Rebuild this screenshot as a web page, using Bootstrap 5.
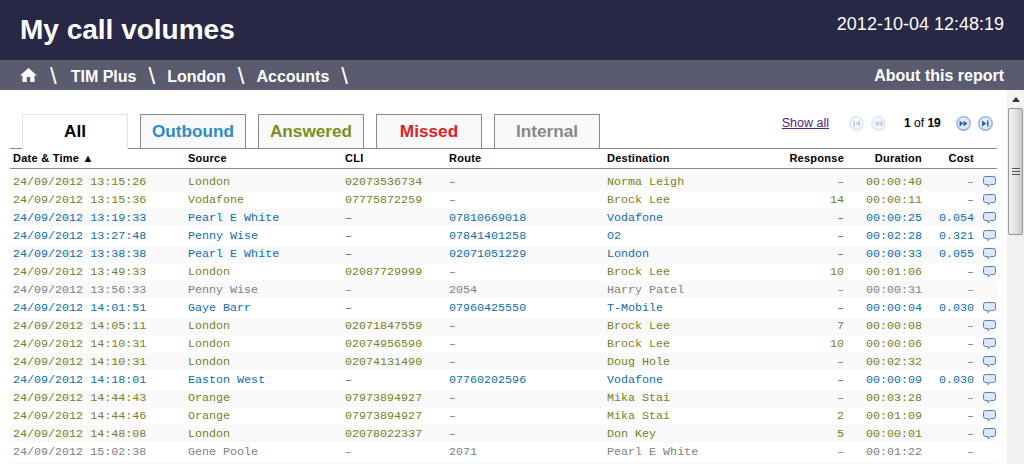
<!DOCTYPE html>
<html lang="en">
<head>
<meta charset="utf-8">
<title>My call volumes</title>
<link href="https://cdn.jsdelivr.net/npm/bootstrap@5.3.0/dist/css/bootstrap.min.css" rel="stylesheet">
<style>
html,body{height:464px;overflow:hidden;background:#fff;font-family:"Liberation Sans",Arial,sans-serif;}
.top-band{height:60px;background:#282745;color:#fff;padding:0 20px;}
.top-band h1{font-size:28px;font-weight:700;margin:0;line-height:60px;}
.top-clock{font-size:18px;line-height:49px;}
.crumb-band{height:30px;background:#5b5b70;color:#fff;padding:0 20px;font-size:16px;font-weight:700;}
.crumb-band a{color:#fff;text-decoration:none;}
.crumb-home{margin-right:1px;}
.crumb-text{padding-top:4px;}
.crumb-sep{font-weight:400;font-size:24px;margin:0 12px;line-height:30px;padding-top:2px;}
.crumb-first{margin-left:2px;}
.crumb-about{padding-top:2px;}
.page-body{height:374px;}
.report-pane{flex:1 1 auto;min-width:0;overflow:hidden;padding:24px 10px 0;}
.tab-strip{height:34px;}
.tab-list{margin-left:12px;gap:12px;border:0;}
.tab-list .nav-link{width:106px;height:34px;margin:0;padding:0;text-align:center;line-height:33px;font-size:17.2px;font-weight:700;background:#f9f9f9;border:1px solid #888;border-bottom:0;border-radius:0;}
.tab-list .nav-link.active{background:#fff;color:#000;height:35px;position:relative;z-index:1;}
.tone-out{color:#2b8cc4;}.tone-ans{color:#7b8f22;}.tone-mis{color:#dc2127;}.tone-int{color:#888;}
.pager-zone{font-size:12px;color:#000;height:18px;padding-right:4px;}
.pager-zone a{color:#551a8b;margin-right:20px;font-size:12.5px;}
.pager-count{margin:0 15px 0 18px;width:37px;white-space:nowrap;}
.pager-gap{margin-left:7px;}
.pager-dim{opacity:.35;}
.report-table{width:987px;table-layout:fixed;border-collapse:separate;border-spacing:0;margin:0;font-family:"Liberation Mono","Courier New",monospace;font-size:11.7px;}
.report-table thead th{height:21px;padding:0 0 1px 0;font:700 11px "Liberation Sans",Arial,sans-serif;letter-spacing:.25px;color:#000;border-top:1px solid #888;border-bottom:1px solid #888;background:#fff;vertical-align:middle;}
.report-table .spacer-row td{height:4px;padding:0;border:0;}
.report-table tbody td{height:18px;padding:0;border:0;white-space:nowrap;line-height:18px;vertical-align:middle;background:transparent;box-shadow:none;}
.report-table tbody tr.row-shade td{background:#f9f9f9;}
.first-col{padding-left:3px!important;}
.num-col{text-align:right;}
.tone-olive td{color:#77801f;}
.tone-blue td{color:#0d6fa8;}
.tone-grey td{color:#808080;}
.report-table tbody td.bubble-cell{text-align:right;line-height:0;padding-right:1px;}
.bubble-cell svg{vertical-align:middle;margin-top:-2px;}
.fake-scroll{width:17px;flex:0 0 17px;background:#f0f0f0;padding-right:1px;}
.scroll-up{height:18px;background:#f4f4f4;margin-left:1px;}
.scroll-thumb{height:127px;margin-left:1px;gap:2px;background:linear-gradient(90deg,#f0f0f0,#e2e2e2 50%,#c8c8c8);border:1px solid #979797;border-radius:2px;}
.grip{width:8px;height:1px;background:#555;}
</style>
</head>
<body>
<div class="top-band d-flex justify-content-between align-items-start">
  <h1>My call volumes</h1>
  <div class="top-clock">2012-10-04 12:48:19</div>
</div>
<nav class="crumb-band d-flex justify-content-between align-items-center">
  <div class="d-flex align-items-center">
    <a href="#" class="d-flex crumb-home" aria-label="Home"><svg width="17" height="14" viewBox="0 0 17 14"><path d="M8.500 0 L17 7.500 H14.500 V14 H10.300 V9 H6.700 V14 H2.500 V7.500 H0 Z" fill="#fff"/></svg></a>
    <span class="crumb-sep">\</span><a href="#" class="crumb-text crumb-first">TIM Plus</a>
    <span class="crumb-sep">\</span><a href="#" class="crumb-text">London</a>
    <span class="crumb-sep">\</span><a href="#" class="crumb-text">Accounts</a>
    <span class="crumb-sep">\</span>
  </div>
  <a href="#" class="crumb-about">About this report</a>
</nav>
<div class="page-body d-flex">
  <main class="report-pane">
    <div class="tab-strip d-flex justify-content-between align-items-start">
      <ul class="nav nav-tabs tab-list">
        <li class="nav-item"><a class="nav-link active" href="#">All</a></li>
        <li class="nav-item"><a class="nav-link tone-out" href="#">Outbound</a></li>
        <li class="nav-item"><a class="nav-link tone-ans" href="#">Answered</a></li>
        <li class="nav-item"><a class="nav-link tone-mis" href="#">Missed</a></li>
        <li class="nav-item"><a class="nav-link tone-int" href="#">Internal</a></li>
      </ul>
      <div class="pager-zone d-flex align-items-center">
        <a href="#">Show all</a>
        <svg class="pager-dim" width="15" height="15" viewBox="0 0 15 15"><use href="#ic-first"/></svg>
        <svg class="pager-dim pager-gap" width="15" height="15" viewBox="0 0 15 15"><use href="#ic-prev"/></svg>
        <span class="pager-count"><b>1</b> of <b>19</b></span>
        <svg width="15" height="15" viewBox="0 0 15 15"><use href="#ic-next"/></svg>
        <svg class="pager-gap" width="15" height="15" viewBox="0 0 15 15"><use href="#ic-last"/></svg>
      </div>
    </div>
    <svg width="0" height="0" class="d-block">
      <defs>
        <radialGradient id="disc" cx="50%" cy="45%" r="55%"><stop offset="0" stop-color="#f4f8fd"/><stop offset=".7" stop-color="#dde8f6"/><stop offset="1" stop-color="#a9c0dc"/></radialGradient>
        <g id="ic-first"><circle cx="7.500" cy="7.500" r="6.800" fill="url(#disc)" stroke="#a0b8d6" stroke-width="1.200"/><path d="M4.500 4.500h1.500v6H4.500zM11 4.500v6L6.500 7.500z" fill="#3f73ae"/></g>
        <g id="ic-prev"><circle cx="7.500" cy="7.500" r="6.800" fill="url(#disc)" stroke="#a0b8d6" stroke-width="1.200"/><path d="M7.500 4.500v6L3.500 7.500zM11.500 4.500v6L7.500 7.500z" fill="#3f73ae"/></g>
        <g id="ic-next"><circle cx="7.500" cy="7.500" r="6.800" fill="url(#disc)" stroke="#93aed2" stroke-width="1.200"/><path d="M3.500 4.500v6L7.500 7.500zM7.500 4.500v6L11.500 7.500z" fill="#2f66a6"/></g>
        <g id="ic-last"><circle cx="7.500" cy="7.500" r="6.800" fill="url(#disc)" stroke="#93aed2" stroke-width="1.200"/><path d="M4 4.500v6L8.500 7.500zM9 4.500h1.500v6H9z" fill="#2f66a6"/></g>
        <g id="ic-bubble"><path d="M2.500 .5H10.500Q12.500 .5 12.500 2.500V6.500Q12.500 8.500 10.500 8.500H7.500L5 10.700V8.500H2.500Q.5 8.500 .5 6.500V2.500Q.5 .5 2.500 .5Z" fill="#dbe8fb" stroke="#4f7fb5"/></g>
      </defs>
    </svg>
    <table class="table report-table">
      <colgroup><col style="width:178px"><col style="width:157px"><col style="width:104px"><col style="width:158px"><col style="width:160px"><col style="width:77px"><col style="width:78px"><col style="width:52px"><col style="width:23px"></colgroup>
      <thead>
        <tr><th class="first-col">Date &amp; Time ▲</th><th>Source</th><th>CLI</th><th>Route</th><th>Destination</th><th class="num-col">Response</th><th class="num-col">Duration</th><th class="num-col">Cost</th><th></th></tr>
      </thead>
      <tbody id="rows">
        <tr class="spacer-row"><td colspan="9"></td></tr>
        <tr class="row-shade tone-olive"><td class="first-col">24/09/2012 13:15:26</td><td>London</td><td>02073536734</td><td>–</td><td>Norma Leigh</td><td class="num-col">–</td><td class="num-col">00:00:40</td><td class="num-col">–</td><td class="bubble-cell"><svg width="13" height="11" viewBox="0 0 13 11"><use href="#ic-bubble"/></svg></td></tr>
        <tr class="tone-olive"><td class="first-col">24/09/2012 13:15:36</td><td>Vodafone</td><td>07775872259</td><td>–</td><td>Brock Lee</td><td class="num-col">14</td><td class="num-col">00:00:11</td><td class="num-col">–</td><td class="bubble-cell"><svg width="13" height="11" viewBox="0 0 13 11"><use href="#ic-bubble"/></svg></td></tr>
        <tr class="row-shade tone-blue"><td class="first-col">24/09/2012 13:19:33</td><td>Pearl E White</td><td>–</td><td>07810669018</td><td>Vodafone</td><td class="num-col">–</td><td class="num-col">00:00:25</td><td class="num-col">0.054</td><td class="bubble-cell"><svg width="13" height="11" viewBox="0 0 13 11"><use href="#ic-bubble"/></svg></td></tr>
        <tr class="tone-blue"><td class="first-col">24/09/2012 13:27:48</td><td>Penny Wise</td><td>–</td><td>07841401258</td><td>O2</td><td class="num-col">–</td><td class="num-col">00:02:28</td><td class="num-col">0.321</td><td class="bubble-cell"><svg width="13" height="11" viewBox="0 0 13 11"><use href="#ic-bubble"/></svg></td></tr>
        <tr class="row-shade tone-blue"><td class="first-col">24/09/2012 13:38:38</td><td>Pearl E White</td><td>–</td><td>02071051229</td><td>London</td><td class="num-col">–</td><td class="num-col">00:00:33</td><td class="num-col">0.055</td><td class="bubble-cell"><svg width="13" height="11" viewBox="0 0 13 11"><use href="#ic-bubble"/></svg></td></tr>
        <tr class="tone-olive"><td class="first-col">24/09/2012 13:49:33</td><td>London</td><td>02087729999</td><td>–</td><td>Brock Lee</td><td class="num-col">10</td><td class="num-col">00:01:06</td><td class="num-col">–</td><td class="bubble-cell"><svg width="13" height="11" viewBox="0 0 13 11"><use href="#ic-bubble"/></svg></td></tr>
        <tr class="row-shade tone-grey"><td class="first-col">24/09/2012 13:56:33</td><td>Penny Wise</td><td>–</td><td>2054</td><td>Harry Patel</td><td class="num-col">–</td><td class="num-col">00:00:31</td><td class="num-col">–</td><td class="bubble-cell"></td></tr>
        <tr class="tone-blue"><td class="first-col">24/09/2012 14:01:51</td><td>Gaye Barr</td><td>–</td><td>07960425550</td><td>T-Mobile</td><td class="num-col">–</td><td class="num-col">00:00:04</td><td class="num-col">0.030</td><td class="bubble-cell"><svg width="13" height="11" viewBox="0 0 13 11"><use href="#ic-bubble"/></svg></td></tr>
        <tr class="row-shade tone-olive"><td class="first-col">24/09/2012 14:05:11</td><td>London</td><td>02071847559</td><td>–</td><td>Brock Lee</td><td class="num-col">7</td><td class="num-col">00:00:08</td><td class="num-col">–</td><td class="bubble-cell"><svg width="13" height="11" viewBox="0 0 13 11"><use href="#ic-bubble"/></svg></td></tr>
        <tr class="tone-olive"><td class="first-col">24/09/2012 14:10:31</td><td>London</td><td>02074956590</td><td>–</td><td>Brock Lee</td><td class="num-col">10</td><td class="num-col">00:00:06</td><td class="num-col">–</td><td class="bubble-cell"><svg width="13" height="11" viewBox="0 0 13 11"><use href="#ic-bubble"/></svg></td></tr>
        <tr class="row-shade tone-olive"><td class="first-col">24/09/2012 14:10:31</td><td>London</td><td>02074131490</td><td>–</td><td>Doug Hole</td><td class="num-col">–</td><td class="num-col">00:02:32</td><td class="num-col">–</td><td class="bubble-cell"><svg width="13" height="11" viewBox="0 0 13 11"><use href="#ic-bubble"/></svg></td></tr>
        <tr class="tone-blue"><td class="first-col">24/09/2012 14:18:01</td><td>Easton West</td><td>–</td><td>07760202596</td><td>Vodafone</td><td class="num-col">–</td><td class="num-col">00:00:09</td><td class="num-col">0.030</td><td class="bubble-cell"><svg width="13" height="11" viewBox="0 0 13 11"><use href="#ic-bubble"/></svg></td></tr>
        <tr class="row-shade tone-olive"><td class="first-col">24/09/2012 14:44:43</td><td>Orange</td><td>07973894927</td><td>–</td><td>Mika Stai</td><td class="num-col">–</td><td class="num-col">00:03:28</td><td class="num-col">–</td><td class="bubble-cell"><svg width="13" height="11" viewBox="0 0 13 11"><use href="#ic-bubble"/></svg></td></tr>
        <tr class="tone-olive"><td class="first-col">24/09/2012 14:44:46</td><td>Orange</td><td>07973894927</td><td>–</td><td>Mika Stai</td><td class="num-col">2</td><td class="num-col">00:01:09</td><td class="num-col">–</td><td class="bubble-cell"><svg width="13" height="11" viewBox="0 0 13 11"><use href="#ic-bubble"/></svg></td></tr>
        <tr class="row-shade tone-olive"><td class="first-col">24/09/2012 14:48:08</td><td>London</td><td>02078022337</td><td>–</td><td>Don Key</td><td class="num-col">5</td><td class="num-col">00:00:01</td><td class="num-col">–</td><td class="bubble-cell"><svg width="13" height="11" viewBox="0 0 13 11"><use href="#ic-bubble"/></svg></td></tr>
        <tr class="tone-grey"><td class="first-col">24/09/2012 15:02:38</td><td>Gene Poole</td><td>–</td><td>2071</td><td>Pearl E White</td><td class="num-col">–</td><td class="num-col">00:01:22</td><td class="num-col">–</td><td class="bubble-cell"></td></tr>
        <tr class="row-shade"><td colspan="9"></td></tr>
      </tbody>
    </table>
  </main>
  <div class="fake-scroll d-flex flex-column" aria-hidden="true">
    <div class="scroll-up d-flex justify-content-center align-items-center"><svg width="8" height="5" viewBox="0 0 8 5"><path d="M0 5L4 0L8 5Z" fill="#333"/></svg></div>
    <div class="scroll-thumb d-flex flex-column justify-content-center align-items-center">
      <div class="grip"></div><div class="grip"></div><div class="grip"></div>
    </div>
  </div>
</div>
<script src="https://cdn.jsdelivr.net/npm/bootstrap@5.3.0/dist/js/bootstrap.bundle.min.js"></script>
</body>
</html>
